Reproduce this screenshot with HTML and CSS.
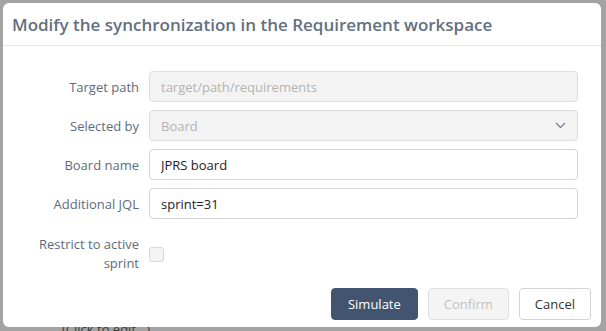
FILE: index.html
```html
<!DOCTYPE html>
<html lang="en">
<head>
    <meta charset="UTF-8">
    <meta name="viewport" content="width=device-width, initial-scale=1.0">
    <title>Modify the synchronization</title>
    <link rel="stylesheet" href="styles.css">
</head>
<body>

    <div class="backdrop">
        <span class="behind-edit">(Click to edit...)</span>
    </div>

    <div class="dialog">
        <div class="dialog-header">
            <h2>Modify the synchronization in the Requirement workspace</h2>
        </div>

        <form class="sync-form">
            <label for="targetPath">Target path</label>
            <input type="text" id="targetPath" value="target/path/requirements" disabled>

            <label for="selectedBy">Selected by</label>
            <div class="select disabled" id="selectedBy">
                <span>Board</span>
                <svg width="11" height="7" viewBox="0 0 11 7"><path d="M1 1 L5.5 5.5 L10 1" fill="none" stroke="#6b778c" stroke-width="1.1"/></svg>
            </div>

            <label for="boardName">Board name</label>
            <input type="text" id="boardName" value="JPRS board">

            <label for="jql">Additional JQL</label>
            <input type="text" id="jql" value="sprint=31">

            <label for="activeSprint" class="two-lines">Restrict to active sprint</label>
            <div class="check-cell"><input type="checkbox" id="activeSprint" disabled></div>
        </form>

        <div class="dialog-footer">
            <button class="btn primary">Simulate</button>
            <button class="btn" disabled>Confirm</button>
            <button class="btn">Cancel</button>
        </div>
    </div>

</body>
</html>
```

FILE: styles.css
```css
body {
    font-family: 'Open Sans', 'Noto Sans', sans-serif;
    margin: 0;
    padding: 0;
    width: 606px;
    height: 331px;
    overflow: hidden;
    background-color: #a3a3a3;
}

.backdrop {
    height: 331px;
    position: relative;
}

.behind-edit {
    position: absolute;
    left: 62px;
    top: 322px;
    font-size: 13px;
    line-height: 14px;
    color: #3a3a3a;
}

.dialog {
    position: absolute;
    top: 3px;
    left: 3px;
    width: 598px;
    height: 324px;
    background-color: #fff;
    border-radius: 6px;
    display: flex;
    flex-direction: column;
}

.dialog-header {
    height: 42px;
    border-bottom: 1px solid #e5e5e5;
    display: flex;
    align-items: center;
    padding-left: 9px;
}

.dialog-header h2 {
    margin: 0;
    font-size: 17px;
    font-weight: 600;
    color: #627080;
}

.sync-form {
    display: grid;
    grid-template-columns: 136px 1fr;
    column-gap: 10px;
    row-gap: 8px;
    align-items: center;
    padding: 25px 23px 0 0;
}

.sync-form label {
    text-align: right;
    font-size: 13px;
    color: #5e6c7a;
}

.sync-form label.two-lines {
    line-height: 19px;
    margin-top: 8px;
    padding-left: 30px;
}

input[type="text"], .select {
    height: 31px;
    padding: 0 11px;
    border: 1px solid #d5d5d5;
    border-radius: 4px;
    box-sizing: border-box;
    font-family: inherit;
    font-size: 13px;
    color: #222;
    background-color: #fff;
}

input[type="text"]:disabled, .select.disabled {
    background-color: #f3f3f3;
    border-color: #dedede;
    color: #b3b3b3;
}

.select {
    display: flex;
    align-items: center;
    justify-content: space-between;
    padding-right: 11px;
}

.check-cell {
    margin-top: 8px;
}

input[type="checkbox"] {
    appearance: none;
    display: block;
    width: 15px;
    height: 15px;
    margin: 0;
    border: 1px solid #d9d9d9;
    border-radius: 3px;
    background-color: #f4f4f4;
}

.dialog-footer {
    margin-top: auto;
    display: flex;
    justify-content: flex-end;
    gap: 10px;
    padding: 0 10px 7px 0;
}

.btn {
    height: 32px;
    padding: 0 15px;
    font-family: inherit;
    font-size: 13px;
    color: #333;
    background-color: #fff;
    border: 1px solid #d5d5d5;
    border-radius: 4px;
}

.btn.primary {
    background-color: #42546f;
    border-color: #42546f;
    color: #fff;
    padding: 0 16px;
}

.btn:disabled {
    background-color: #f4f4f4;
    border-color: #e0e0e0;
    color: #c2c2c2;
}
```
